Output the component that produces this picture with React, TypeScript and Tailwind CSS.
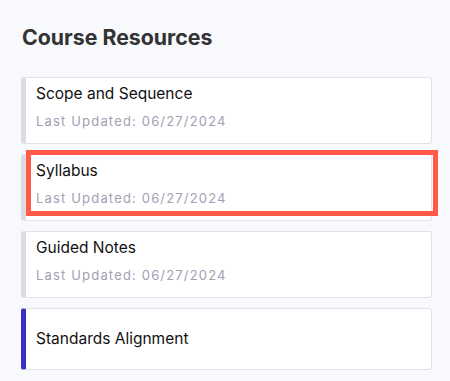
import React from "react";

type Item = { title: string; updated?: string; accent?: boolean; highlight?: boolean };

const items: Item[] = [
  { title: "Scope and Sequence", updated: "06/27/2024" },
  { title: "Syllabus", updated: "06/27/2024", highlight: true },
  { title: "Guided Notes", updated: "06/27/2024" },
  { title: "Standards Alignment", accent: true },
];

export default function App() {
  return (
    <div
      className="w-[450px] h-[381px] bg-[#f8f9fd] overflow-hidden pl-[21px] pr-[18px] pt-[25px]"
      style={{ fontFamily: "Inter, 'Noto Sans', sans-serif" }}
    >
      <h2 className="text-[21.3px] leading-[24px] font-bold text-[#333333] pl-px">Course Resources</h2>
      <div className="mt-[28px] flex flex-col gap-[10px]">
        {items.map((it) => (
          <div key={it.title} className="relative">
            <div
              className={`flex flex-col bg-white rounded-[3px] border border-[#e2e2e8] border-l-[5px] ${
                it.accent ? "border-l-[#3b2fc4] h-[62px] justify-center" : "border-l-[#dcdce2] h-[67px] pt-[5px]"
              } pl-[10px]`}
            >
              <div className="text-[15.5px] leading-[22px] text-[#111111]">{it.title}</div>
              {it.updated && (
                <div className="mt-[7px] text-[13px] leading-[18px] tracking-[0.09em] text-[#a3a0b4]">
                  Last Updated: {it.updated}
                </div>
              )}
            </div>
            {it.highlight && (
              <div className="absolute left-[5px] right-[-6px] top-[-4px] bottom-[5px] border-[5px] border-[#ff5a4a] pointer-events-none" />
            )}
          </div>
        ))}
      </div>
    </div>
  );
}
